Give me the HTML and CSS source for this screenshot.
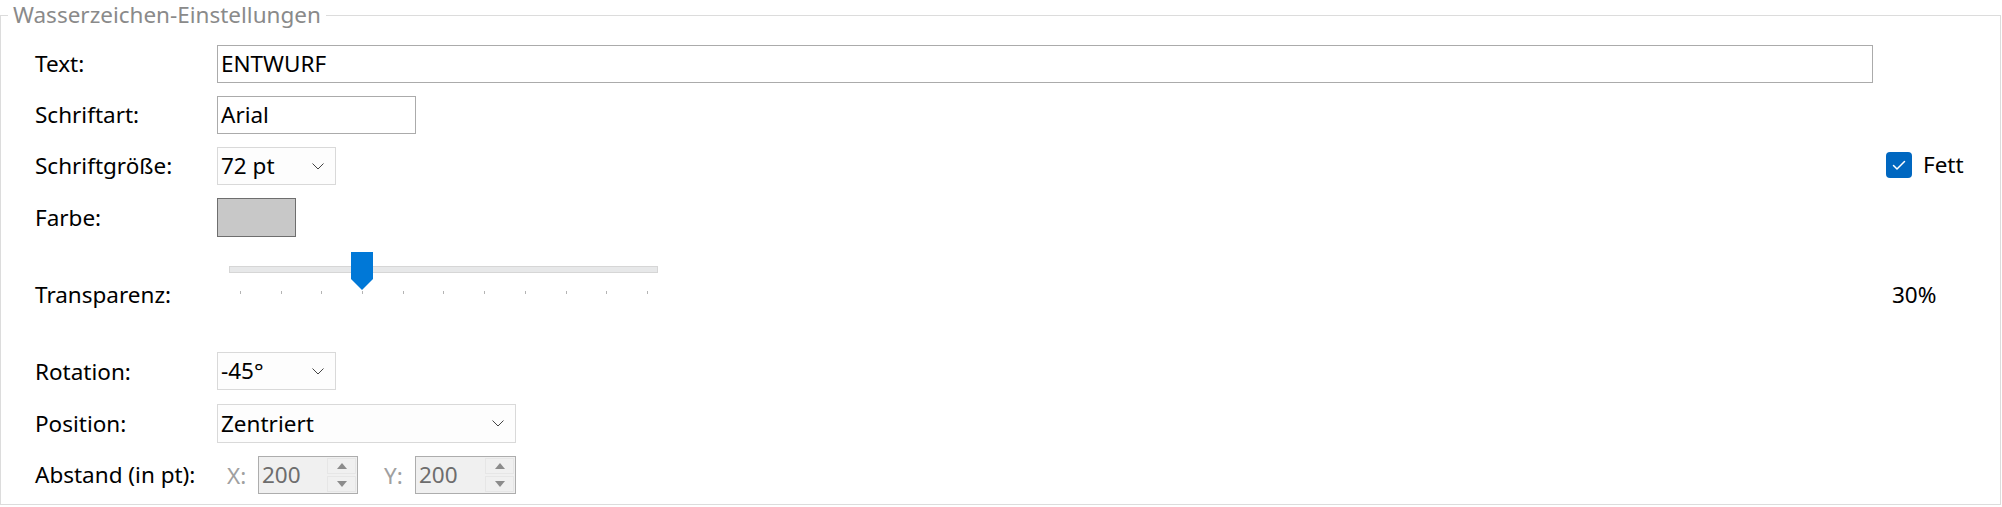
FILE: index.html
```html
<!DOCTYPE html>
<html lang="de">
<head>
<meta charset="utf-8">
<title>Wasserzeichen-Einstellungen</title>
<link rel="stylesheet" href="styles.css">
</head>
<body>
<fieldset class="group">
  <legend class="group-title">Wasserzeichen-Einstellungen</legend>
  <div class="form">
    <div class="lbl">Text:</div>
    <div class="ctl"><div class="textbox full">ENTWURF</div></div>

    <div class="lbl">Schriftart:</div>
    <div class="ctl"><div class="textbox font">Arial</div></div>

    <div class="lbl">Schriftgröße:</div>
    <div class="ctl">
      <div class="combo small"><span>72 pt</span>
        <svg class="chev" width="12" height="7" viewBox="0 0 12 7"><polyline points="0.5,0.5 6,6 11.5,0.5" fill="none" stroke="#444" stroke-width="1"/></svg>
      </div>
    </div>
    <div class="side">
      <div class="check">
        <span class="box"><svg width="26" height="26" viewBox="0 0 26 26"><path d="M7.5 13.5 L11 17 L18.5 9.5" fill="none" stroke="#fff" stroke-width="1.5" stroke-linecap="round" stroke-linejoin="round"/></svg></span>
        <span>Fett</span>
      </div>
    </div>

    <div class="lbl">Farbe:</div>
    <div class="ctl"><div class="swatch"></div></div>

    <div class="lbl">Transparenz:</div>
    <div class="ctl">
      <div class="slider">
        <div class="track"></div>
        <svg class="thumb" width="22" height="38" viewBox="0 0 22 38"><polygon points="0,0 22,0 22,27 11,38 0,27" fill="#0078d7"/></svg>
        <div class="ticks"><i></i><i></i><i></i><i></i><i></i><i></i><i></i><i></i><i></i><i></i><i></i></div>
      </div>
    </div>
    <div class="side"><span class="pct">30%</span></div>

    <div class="lbl">Rotation:</div>
    <div class="ctl">
      <div class="combo small"><span>-45°</span>
        <svg class="chev" width="12" height="7" viewBox="0 0 12 7"><polyline points="0.5,0.5 6,6 11.5,0.5" fill="none" stroke="#444" stroke-width="1"/></svg>
      </div>
    </div>

    <div class="lbl">Position:</div>
    <div class="ctl">
      <div class="combo wide"><span>Zentriert</span>
        <svg class="chev" width="12" height="7" viewBox="0 0 12 7"><polyline points="0.5,0.5 6,6 11.5,0.5" fill="none" stroke="#444" stroke-width="1"/></svg>
      </div>
    </div>

    <div class="lbl">Abstand (in pt):</div>
    <div class="ctl spacing">
      <span class="axis axis-x">X:</span>
      <div class="spin">
        <span class="val">200</span>
        <div class="btns">
          <div class="btn"><svg width="10" height="6" viewBox="0 0 10 6"><polygon points="5,0 10,6 0,6" fill="#8c8c8c"/></svg></div>
          <div class="btn"><svg width="10" height="6" viewBox="0 0 10 6"><polygon points="0,0 10,0 5,6" fill="#8c8c8c"/></svg></div>
        </div>
      </div>
      <span class="axis axis-y">Y:</span>
      <div class="spin spin-y">
        <span class="val">200</span>
        <div class="btns">
          <div class="btn"><svg width="10" height="6" viewBox="0 0 10 6"><polygon points="5,0 10,6 0,6" fill="#8c8c8c"/></svg></div>
          <div class="btn"><svg width="10" height="6" viewBox="0 0 10 6"><polygon points="0,0 10,0 5,6" fill="#8c8c8c"/></svg></div>
        </div>
      </div>
    </div>
  </div>
</fieldset>
</body>
</html>
```

FILE: styles.css
```css
html, body {
  margin: 0;
  padding: 0;
  background: #ffffff;
}

body {
  font-family: "Noto Sans", "Open Sans", sans-serif;
  font-size: 22.5px;
  color: #000;
}

.group {
  margin: 0 1px 0 0;
  padding: 15px 0 10px 0;
  border: 1px solid #dcdcdc;
  min-width: 0;
}

.group-title {
  margin-left: 7px;
  padding: 0 5px;
  line-height: 30px;
  color: #8a8a8a;
}

.form {
  margin: 0 34px;
  display: grid;
  grid-template-columns: 182px 1fr 93px;
  grid-template-rows: 38px 38px 38px 39px 89px 39px 39px 38px;
  row-gap: 13px;
  column-gap: 0;
}

.lbl {
  grid-column: 1;
  align-self: center;
  line-height: 30px;
  white-space: nowrap;
}

.ctl {
  grid-column: 2;
  min-width: 0;
}

.side {
  grid-column: 3;
  padding-left: 13px;
  display: flex;
  align-items: center;
}

.textbox {
  box-sizing: border-box;
  height: 38px;
  border: 1px solid #ababab;
  background: #fff;
  padding-left: 3px;
  line-height: 36px;
}

.textbox.full { width: 100%; }
.textbox.font { width: 199px; }

.combo {
  box-sizing: border-box;
  height: 38px;
  border: 1px solid #d9d9d9;
  background: #fdfdfd;
  padding: 0 11px 0 3px;
  display: flex;
  align-items: center;
  justify-content: space-between;
  line-height: 36px;
}

.combo.small { width: 119px; }
.combo.wide { width: 299px; height: 39px; }

.chev { display: block; flex: none; }

.swatch {
  box-sizing: border-box;
  width: 79px;
  height: 39px;
  border: 1px solid #6e6e6e;
  background: #c8c8c8;
}

.check {
  display: flex;
  align-items: center;
  gap: 11px;
  margin-top: -3px;
}

.check .box {
  width: 26px;
  height: 26px;
  border-radius: 4px;
  background: #0067c0;
  display: block;
}

.check .box svg { display: block; }

.pct { margin-left: 6px; }

.slider {
  position: relative;
  margin-left: 12px;
  width: 429px;
  padding-top: 16px;
}

.track {
  box-sizing: border-box;
  height: 7px;
  background: #e7e8e9;
  border: 1px solid #d6d6d6;
}

.thumb {
  position: absolute;
  left: 122px;
  top: 2px;
  display: block;
}

.ticks {
  display: flex;
  justify-content: space-between;
  margin: 18px 10px 0 11px;
}

.ticks i {
  display: block;
  width: 1px;
  height: 3px;
  background: #b4b4b4;
}

.spacing {
  display: flex;
  align-items: center;
}

.axis {
  color: #a0a0a0;
  width: 31px;
  flex: none;
}

.axis-x { margin-left: 10px; }
.axis-y { margin-left: 26px; }

.spin {
  box-sizing: border-box;
  width: 100px;
  height: 38px;
  border: 1px solid #adadad;
  background: #f0f0f0;
  display: flex;
  align-items: stretch;
}

.spin-y { width: 101px; }

.spin .val {
  color: #6d6d6d;
  padding-left: 3px;
  line-height: 36px;
}

.btns {
  margin-left: auto;
  width: 29px;
  padding: 1px 1px 1px 0;
  display: flex;
  flex-direction: column;
  justify-content: space-between;
}

.btn {
  box-sizing: border-box;
  height: 16px;
  border: 1px solid #e6e6e6;
  background: #f0f0f0;
  display: flex;
  align-items: center;
  justify-content: center;
}

.btn svg { display: block; }
```
